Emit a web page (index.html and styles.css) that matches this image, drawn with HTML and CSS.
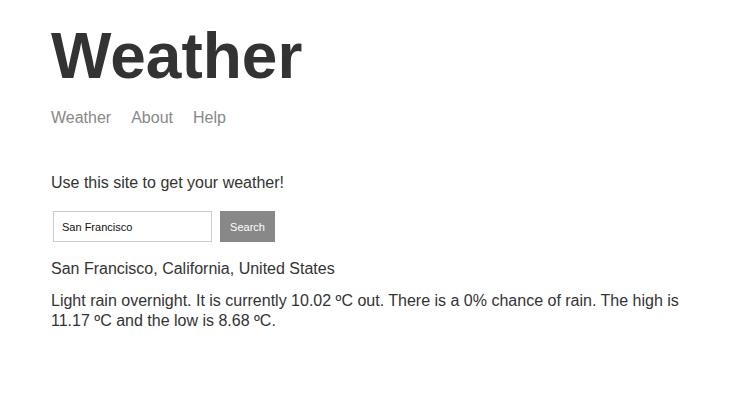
FILE: index.html
```html
<!DOCTYPE html>
<html lang="en">
<head>
<meta charset="utf-8">
<title>Weather</title>
<link rel="stylesheet" href="styles.css">
</head>
<body>
<div class="main-content">
  <header class="header">
    <h1 class="title">Weather</h1>
    <nav class="nav">
      <a href="#">Weather</a>
      <a href="#">About</a>
      <a href="#">Help</a>
    </nav>
  </header>
  <p class="intro">Use this site to get your weather!</p>
  <form class="search-form">
    <input class="search-input" type="text" value="San Francisco" placeholder="Location">
    <button class="search-btn" type="button">Search</button>
  </form>
  <p class="location">San Francisco, California, United States</p>
  <p class="forecast">Light rain overnight. It is currently 10.02 ºC out. There is a 0% chance of rain. The high is 11.17 ºC and the low is 8.68 ºC.</p>
</div>
</body>
</html>
```

FILE: styles.css
```css
html, body {
  margin: 0;
  padding: 0;
  background: #fff;
}

body {
  font-family: "Liberation Sans", Arial, Helvetica, sans-serif;
  color: #333;
  font-size: 16px;
}

.main-content {
  max-width: 641px;
  margin: 0 auto;
  padding-top: 19px;
}

.header {
  margin-bottom: 47px;
}

.title {
  margin: 0;
  font-size: 64px;
  line-height: 74px;
  font-weight: bold;
  color: #333;
}

.nav {
  display: flex;
  gap: 20px;
  margin-top: 16px;
  line-height: 18px;
}

.nav a {
  color: #888;
  text-decoration: none;
}

.intro {
  margin: 0 0 19px;
  line-height: 18px;
}

.search-form {
  display: flex;
  gap: 8px;
  margin: 0 0 18px 2px;
}

.search-input {
  box-sizing: border-box;
  width: 159px;
  height: 31px;
  padding: 0 8px;
  border: 1px solid #ccc;
  font-family: "Liberation Sans", Arial, sans-serif;
  font-size: 11px;
  color: #111;
  outline: none;
}

.search-btn {
  box-sizing: border-box;
  width: 55px;
  height: 31px;
  padding: 0;
  border: none;
  background: #888;
  color: #fff;
  font-family: "Liberation Sans", Arial, sans-serif;
  font-size: 11px;
  cursor: pointer;
}

.location {
  margin: 0 0 13px;
  line-height: 18px;
}

.forecast {
  margin: 0;
  line-height: 20px;
}
```
